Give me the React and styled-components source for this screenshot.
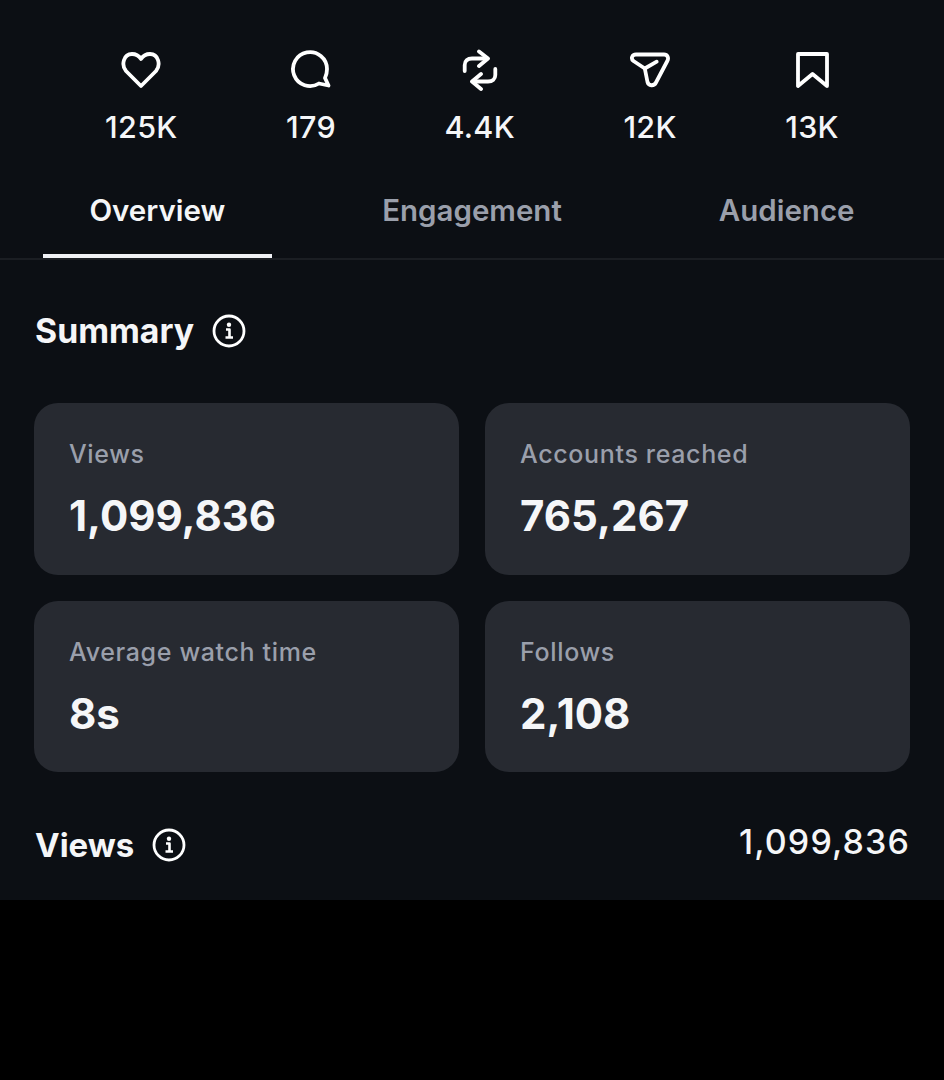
import React from 'react'
import styled, { createGlobalStyle } from 'styled-components'

const GlobalStyle = createGlobalStyle`
  html, body {
    margin: 0;
    background: #000;
  }
  body {
    font-family: Inter, "Liberation Sans", sans-serif;
    -webkit-font-smoothing: antialiased;
  }
`

const stats = [
  { label: '125K', icon: 'heart' },
  { label: '179', icon: 'comment' },
  { label: '4.4K', icon: 'repost' },
  { label: '12K', icon: 'send' },
  { label: '13K', icon: 'bookmark' }
]

const tabs = ['Overview', 'Engagement', 'Audience']

const cards = [
  { label: 'Views', value: '1,099,836' },
  { label: 'Accounts reached', value: '765,267' },
  { label: 'Average watch time', value: '8s' },
  { label: 'Follows', value: '2,108' }
]

const icons = {
  heart: <path d="M21 37L6 22C1 16 3.500 5 12 5C16 5 19 7 21 10C23 7 26 5 30 5C38.500 5 41 16 36 22Z" />,
  comment: <path d="M37 20A17 17 0 1 0 29 34.500L38.500 36.500L35 29C36.300 26.300 37 23 37 20Z" />,
  repost: (
    <>
      <path d="M20 2.500L29 9.500L20 17" />
      <path d="M27 9.500H13C8.500 9.500 5.700 12 5.700 16V22" />
      <path d="M22 25L13 32.500L22 40" />
      <path d="M15 32.500H29C33.500 32.500 36.300 30 36.300 26V20" />
    </>
  ),
  send: (
    <>
      <path d="M7 5.500H35C38.500 5.500 40 9 38.300 12L27 33.500C25 37.500 19.500 37 18.500 33L15.800 19.500L4.500 12C1.500 9.500 3 5.500 7 5.500Z" />
      <path d="M15.800 19.500L27.700 12.700" />
    </>
  ),
  bookmark: <path d="M7 5H36V37L21.500 25L7 37Z" />
}

const StatIcon = ({ name }) => (
  <IconSvg viewBox="0 0 42 42" fill="none" stroke="#fff" strokeWidth="3.800" strokeLinecap="round" strokeLinejoin="round">
    {icons[name]}
  </IconSvg>
)

const InfoIcon = () => (
  <InfoSvg viewBox="0 0 34 34" fill="none">
    <circle cx="17" cy="17" r="15" stroke="#fff" strokeWidth="2.800" />
    <circle cx="17" cy="10.800" r="2.200" fill="#fff" />
    <path d="M14 15.500H17.500V23.500M13.500 23.500H21" stroke="#fff" strokeWidth="2.600" strokeLinejoin="round" />
  </InfoSvg>
)

export default function App() {
  return (
    <Page>
      <GlobalStyle />
      <StatsRow>
        {stats.map(({ label, icon }) => (
          <Stat key={label}>
            <StatIcon name={icon} />
            <StatLabel>{label}</StatLabel>
          </Stat>
        ))}
      </StatsRow>
      <TabBar>
        {tabs.map((tab, i) => (
          <Tab key={tab} $active={i === 0}>{tab}</Tab>
        ))}
      </TabBar>
      <Content>
        <SectionTitle $size={33.8}>
          Summary
          <InfoIcon />
        </SectionTitle>
        <CardGrid>
          {cards.map(({ label, value }) => (
            <Card key={label}>
              <CardLabel>{label}</CardLabel>
              <CardValue>{value}</CardValue>
            </Card>
          ))}
        </CardGrid>
        <ViewsRow>
          <SectionTitle $size={33}>
            Views
            <InfoIcon />
          </SectionTitle>
          <ViewsTotal>1,099,836</ViewsTotal>
        </ViewsRow>
      </Content>
    </Page>
  )
}

const Page = styled.div`
  width: 944px;
  height: 900px;
  background: #0c0f14;
  overflow: hidden;
`

const StatsRow = styled.div`
  display: flex;
  justify-content: center;
  gap: 108.5px;
  padding-top: 49px;
`

const Stat = styled.div`
  display: flex;
  flex-direction: column;
  align-items: center;
`

const IconSvg = styled.svg`
  width: 42px;
  height: 42px;
  display: block;
`

const StatLabel = styled.div`
  margin-top: 18px;
  font-size: 30.5px;
  line-height: 36px;
  font-weight: 500;
  letter-spacing: 0.3px;
  color: #f5f6f8;
`

const TabBar = styled.div`
  display: grid;
  grid-template-columns: repeat(3, 1fr);
  margin-top: 25px;
  border-bottom: 2px solid #1b1e23;
`

const Tab = styled.div`
  position: relative;
  height: 88px;
  padding-top: 22px;
  box-sizing: border-box;
  text-align: center;
  font-size: 29.5px;
  line-height: 36px;
  font-weight: 600;
  color: ${p => (p.$active ? '#f5f6f8' : '#9a9fab')};

  &::after {
    content: '';
    display: ${p => (p.$active ? 'block' : 'none')};
    position: absolute;
    left: 43px;
    right: 43px;
    bottom: 0;
    height: 4px;
    background: #f0f1f5;
  }
`

const Content = styled.div`
  padding: 51px 34px 0;
`

const SectionTitle = styled.div`
  display: flex;
  align-items: center;
  gap: 18px;
  padding-left: 1px;
  font-size: ${p => p.$size}px;
  line-height: 40px;
  font-weight: 700;
  color: #f5f6f8;
`

const InfoSvg = styled.svg`
  width: 34px;
  height: 34px;
  display: block;
`

const CardGrid = styled.div`
  display: grid;
  grid-template-columns: 1fr 1fr;
  gap: 26px;
  margin-top: 52px;
`

const Card = styled.div`
  height: 171.5px;
  box-sizing: border-box;
  padding: 34px 35px;
  border-radius: 24px;
  background: #272a31;
`

const CardLabel = styled.div`
  font-size: 25px;
  line-height: 34px;
  font-weight: 500;
  letter-spacing: 0.65px;
  color: #9a9fab;
`

const CardValue = styled.div`
  margin-top: 19px;
  font-size: 42px;
  line-height: 52px;
  font-weight: 700;
  color: #f5f6f8;
`

const ViewsRow = styled.div`
  display: flex;
  justify-content: space-between;
  align-items: flex-start;
  margin-top: 52.5px;
`

const ViewsTotal = styled.div`
  margin-top: -3px;
  font-size: 34px;
  line-height: 40px;
  font-weight: 500;
  letter-spacing: 1.1px;
  color: #f5f6f8;
`
